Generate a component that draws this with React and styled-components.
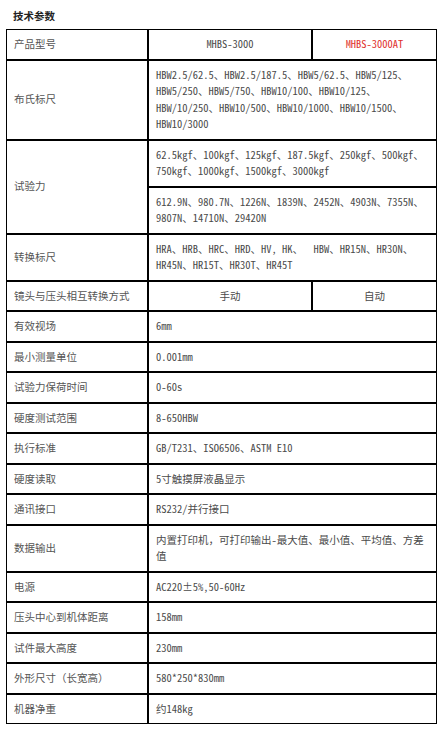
import React from 'react';
import styled, { createGlobalStyle } from 'styled-components';

const GlobalStyle = createGlobalStyle`
  html, body {
    margin: 0;
    padding: 0;
    background: #fff;
  }
  body {
    font-family: "Noto Sans Mono CJK SC", "Noto Sans CJK SC", "DejaVu Sans Mono", monospace;
  }
`;

const Page = styled.div`
  padding: 8px 10px 10px 6px;
`;

const Title = styled.h3`
  margin: 0 0 5px 7px;
  font-family: "Noto Sans CJK SC", sans-serif;
  font-size: 10.5px;
  line-height: 16px;
  font-weight: 700;
  color: #222;
`;

const Table = styled.table`
  width: 431px;
  border-collapse: separate;
  border-spacing: 0;
  table-layout: fixed;
`;

const Cell = styled.td`
  border: 1px solid #000;
  padding: 6px 7px;
  font-size: 10.5px;
  line-height: 16.5px;
  white-space: pre;
  vertical-align: middle;
  text-align: ${(p) => (p.$center ? 'center' : 'left')};
  color: ${(p) => (p.$red ? '#e0302c' : '#4a4a4a')};
`;

const Label = styled(Cell)`
  font-family: "Noto Sans CJK SC", sans-serif;
  color: #555;
`;

const Lines = ({ lines }) => lines.join('\n');

const simpleRows = [
  ['有效视场', ['6mm']],
  ['最小测量单位', ['0.001mm']],
  ['试验力保荷时间', ['0-60s']],
  ['硬度测试范围', ['8-650HBW']],
  ['执行标准', ['GB/T231、ISO6506、ASTM E10']],
  ['硬度读取', ['5寸触摸屏液晶显示']],
  ['通讯接口', ['RS232/并行接口']],
  ['数据输出', ['内置打印机，可打印输出-最大值、最小值、平均值、方差', '值']],
  ['电源', ['AC220±5%,50-60Hz']],
  ['压头中心到机体距离', ['158mm']],
  ['试件最大高度', ['230mm']],
  ['外形尺寸（长宽高）', ['580*250*830mm']],
  ['机器净重', ['约148kg']],
];

const App = () => (
  <Page>
    <GlobalStyle />
    <Title>技术参数</Title>
    <Table>
      <colgroup>
        <col style={{ width: 142 }} />
        <col style={{ width: 164 }} />
        <col style={{ width: 125 }} />
      </colgroup>
      <tbody>
        <tr>
          <Label>产品型号</Label>
          <Cell $center>MHBS-3000</Cell>
          <Cell $center $red>MHBS-3000AT</Cell>
        </tr>
        <tr>
          <Label>布氏标尺</Label>
          <Cell colSpan={2}>
            <Lines
              lines={[
                'HBW2.5/62.5、HBW2.5/187.5、HBW5/62.5、HBW5/125、',
                'HBW5/250、HBW5/750、HBW10/100、HBW10/125、',
                'HBW/10/250、HBW10/500、HBW10/1000、HBW10/1500、',
                'HBW10/3000',
              ]}
            />
          </Cell>
        </tr>
        <tr>
          <Label rowSpan={2}>试验力</Label>
          <Cell colSpan={2}>
            <Lines
              lines={[
                '62.5kgf、100kgf、125kgf、187.5kgf、250kgf、500kgf、',
                '750kgf、1000kgf、1500kgf、3000kgf',
              ]}
            />
          </Cell>
        </tr>
        <tr>
          <Cell colSpan={2}>
            <Lines
              lines={[
                '612.9N、980.7N、1226N、1839N、2452N、4903N、7355N、',
                '9807N、14710N、29420N',
              ]}
            />
          </Cell>
        </tr>
        <tr>
          <Label>转换标尺</Label>
          <Cell colSpan={2}>
            <Lines
              lines={[
                'HRA、HRB、HRC、HRD、HV, HK、  HBW、HR15N、HR30N、',
                'HR45N、HR15T、HR30T、HR45T',
              ]}
            />
          </Cell>
        </tr>
        <tr>
          <Label>镜头与压头相互转换方式</Label>
          <Cell $center>手动</Cell>
          <Cell $center>自动</Cell>
        </tr>
        {simpleRows.map(([name, value]) => (
          <tr key={name}>
            <Label>{name}</Label>
            <Cell colSpan={2}>
              <Lines lines={value} />
            </Cell>
          </tr>
        ))}
      </tbody>
    </Table>
  </Page>
);

export default App;
